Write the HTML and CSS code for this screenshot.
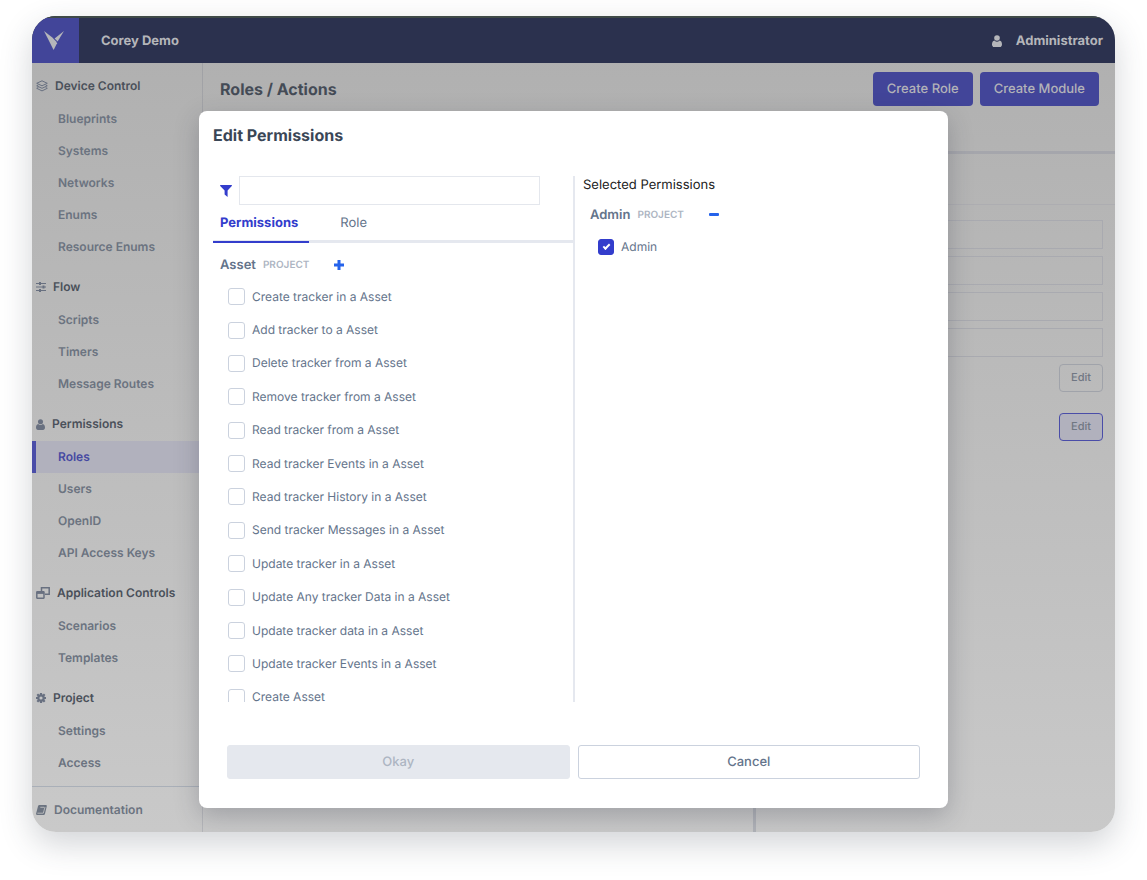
FILE: index.html
```html
<!DOCTYPE html>
<html lang="en">
<head>
<meta charset="utf-8">
<title>Corey Demo – Roles / Actions</title>
<meta name="viewport" content="width=device-width, initial-scale=1">
<link rel="stylesheet" href="styles.css">
</head>
<body>
<svg class="defs" aria-hidden="true">
  <symbol id="user" viewBox="0 0 10 12"><circle cx="5" cy="3" r="2.8"/><path d="M2.4 5.4C.8 5.7 0 7.3 0 9.4 0 10.900.9 12 2.200 12h5.600C9.100 12 10 10.900 10 9.400c0-2.100-.8-3.700-2.400-4a3.700 3.700 0 0 1-5.200 0z"/></symbol>
</svg>
<div class="app">
  <header class="topbar">
    <a class="logo" href="#" aria-label="Home">
      <svg width="20" height="19" viewBox="0 0 20 19" fill="currentColor"><path d="M0 0 8 6.200 12.200 10.600 13 12.300 9.600 19z"/><path d="M20 0 13.600 10.600 10.600 7.600z"/></svg>
    </a>
    <span class="project">Corey Demo</span>
    <a class="account" href="#"><svg width="10" height="12" fill="currentColor"><use href="#user"/></svg>Administrator</a>
  </header>
  <div class="body">
    <nav class="sidebar">
      <section class="group">
        <h2 class="group-title"><svg width="12" height="12" viewBox="0 0 12 12" fill="none" stroke="currentColor" stroke-width="1" stroke-linejoin="round"><path d="M6 .8 11.300 3.300 6 5.800.7 3.300z"/><path d="M2.300 5 .7 5.800 6 8.300l5.300-2.500L9.700 5"/><path d="M2.300 7.500.7 8.300 6 10.900l5.300-2.600-1.600-.8"/></svg>Device Control</h2>
        <a class="item" href="#">Blueprints</a>
        <a class="item" href="#">Systems</a>
        <a class="item" href="#">Networks</a>
        <a class="item" href="#">Enums</a>
        <a class="item" href="#">Resource Enums</a>
      </section>
      <section class="group">
        <h2 class="group-title"><svg width="10" height="10" viewBox="0 0 10 10" stroke="currentColor" fill="none"><path d="M0 1.500h10M0 5h10M0 8.500h10"/><path stroke-width="2" d="M4 0v3M7.500 3.500v3M4 7v3"/></svg>Flow</h2>
        <a class="item" href="#">Scripts</a>
        <a class="item" href="#">Timers</a>
        <a class="item" href="#">Message Routes</a>
      </section>
      <section class="group">
        <h2 class="group-title"><svg width="9" height="11" fill="currentColor"><use href="#user"/></svg>Permissions</h2>
        <a class="item active" href="#" aria-current="page">Roles</a>
        <a class="item" href="#">Users</a>
        <a class="item" href="#">OpenID</a>
        <a class="item" href="#">API Access Keys</a>
      </section>
      <section class="group">
        <h2 class="group-title"><svg width="14" height="12" viewBox="0 0 14 12" fill="none" stroke="currentColor" stroke-width="1.500"><path d="M5.500 4V.8h7.700v6.500H9"/><rect x=".8" y="4.800" width="7.200" height="6.400" rx=".4"/><path stroke-width="2.200" d="M1 5.800h7"/></svg>Application Controls</h2>
        <a class="item" href="#">Scenarios</a>
        <a class="item" href="#">Templates</a>
      </section>
      <section class="group">
        <h2 class="group-title"><svg width="10" height="10" viewBox="0 0 10 10" fill="none" stroke="currentColor"><circle cx="5" cy="5" r="2.700" stroke-width="2.200"/><path stroke-width="2.200" d="M5 0v2M5 8v2M0 5h2M8 5h2M1.300 1.300l1.500 1.500M7.200 7.200l1.500 1.500M1.300 8.700l1.500-1.500M7.200 2.800l1.500-1.500"/></svg>Project</h2>
        <a class="item" href="#">Settings</a>
        <a class="item" href="#">Access</a>
      </section>
      <a class="docs" href="#"><svg width="11" height="10" viewBox="0 0 11 10"><path fill="currentColor" d="M3.400 0h6.400q1.300 0 1 1.200L9 8.800Q8.700 10 7.500 10H1.300Q-.2 10 .1 8.500L2 1.200Q2.300 0 3.400 0z"/><path d="M4.300 2.300h3.800M1.400 8.200h5.900L9 2" fill="none" stroke="#c6c6c6" stroke-width=".8"/></svg>Documentation</a>
    </nav>
    <main class="main">
      <div class="page-head">
        <h1>Roles / Actions</h1>
        <button class="primary" type="button">Create Role</button>
        <button class="primary" type="button">Create Module</button>
      </div>
      <div class="columns">
        <div class="column-list"></div>
        <div class="details">
          <div class="details-head"></div>
          <div class="details-form">
            <input type="text" aria-label="Role name">
            <input type="text" aria-label="Role key">
            <input type="text" aria-label="Description">
            <input type="text" aria-label="Default page">
            <button class="edit" type="button">Edit</button>
            <button class="edit current" type="button">Edit</button>
          </div>
        </div>
      </div>
    </main>
  </div>

  <div class="overlay">
    <div class="modal" role="dialog" aria-modal="true" aria-labelledby="modal-title">
      <h2 class="modal-title" id="modal-title">Edit Permissions</h2>
      <div class="panes">
        <div class="pane available">
          <div class="filter">
            <label for="filter" aria-label="Filter permissions"><svg width="12" height="12" viewBox="0 0 12 12" fill="currentColor"><path d="M.5 0h11q.8.3.300 1L7.600 5.500V12L4.600 9.500v-4L.2 1Q-.2.3.5 0z"/></svg></label>
            <input id="filter" type="text">
          </div>
          <div class="tabs" role="tablist">
            <button class="tab selected" role="tab" aria-selected="true" type="button">Permissions</button>
            <button class="tab" role="tab" aria-selected="false" type="button">Role</button>
          </div>
          <div class="scope"><strong>Asset</strong><span>PROJECT</span>
            <button class="toggle" type="button" aria-label="Add all"><svg width="10" height="10" viewBox="0 0 10 10" stroke="currentColor" stroke-width="3"><path d="M5 0v10M0 5h10"/></svg></button>
          </div>
          <div class="options">
            <label class="option"><input type="checkbox">Create tracker in a Asset</label>
            <label class="option"><input type="checkbox">Add tracker to a Asset</label>
            <label class="option"><input type="checkbox">Delete tracker from a Asset</label>
            <label class="option"><input type="checkbox">Remove tracker from a Asset</label>
            <label class="option"><input type="checkbox">Read tracker from a Asset</label>
            <label class="option"><input type="checkbox">Read tracker Events in a Asset</label>
            <label class="option"><input type="checkbox">Read tracker History in a Asset</label>
            <label class="option"><input type="checkbox">Send tracker Messages in a Asset</label>
            <label class="option"><input type="checkbox">Update tracker in a Asset</label>
            <label class="option"><input type="checkbox">Update Any tracker Data in a Asset</label>
            <label class="option"><input type="checkbox">Update tracker data in a Asset</label>
            <label class="option"><input type="checkbox">Update tracker Events in a Asset</label>
            <label class="option"><input type="checkbox">Create Asset</label>
          </div>
        </div>
        <div class="pane chosen">
          <h3 class="chosen-title">Selected Permissions</h3>
          <div class="scope"><strong>Admin</strong><span>PROJECT</span>
            <button class="toggle" type="button" aria-label="Remove all"><svg width="10" height="10" viewBox="0 0 10 10"><rect y="3" width="10" height="3" rx="1" fill="currentColor"/></svg></button>
          </div>
          <label class="option"><input type="checkbox" checked>Admin</label>
        </div>
      </div>
      <div class="actions">
        <button class="action" type="button" disabled>Okay</button>
        <button class="action" type="button">Cancel</button>
      </div>
    </div>
  </div>
</div>
</body>
</html>
```

FILE: styles.css
```css
*,
*::before,
*::after {
  box-sizing: border-box;
}

body {
  margin: 0;
  padding: 16px 32px 48px;
  background: #fff;
  color: #64748b;
  font: 12px/16px Inter, "Liberation Sans", sans-serif;
  text-rendering: geometricPrecision;
}

h1,
h2,
h3 {
  margin: 0;
}

a {
  color: inherit;
  text-decoration: none;
}

button,
input {
  font: inherit;
  margin: 0;
  text-rendering: inherit;
}

button {
  padding: 0;
  cursor: pointer;
}

svg {
  display: block;
  flex: none;
}

.defs {
  position: absolute;
  width: 0;
  height: 0;
}

.app {
  position: relative;
  display: flex;
  flex-direction: column;
  overflow: hidden;
  border-radius: 24px;
  background: linear-gradient(#afafaf, #c9c9c9);
  box-shadow: 0 12px 32px rgba(50, 60, 75, 0.22);
}

.topbar {
  display: flex;
  align-items: center;
  height: 47px;
  border-top: 2px solid #3f4a48;
  background: #2b314e;
  color: #b5b6ba;
  font-size: 13px;
  font-weight: 700;
}

.logo {
  display: grid;
  place-items: center;
  width: 47px;
  height: 100%;
  margin-right: 22px;
  padding-right: 3px;
  background: #424599;
}

.account {
  display: flex;
  align-items: center;
  gap: 14px;
  margin-left: auto;
  padding-right: 12px;
}

.body {
  display: flex;
  flex: 1;
}

.sidebar {
  flex: none;
  width: 171px;
  padding-top: 6px;
  border-right: 1px solid rgba(80, 90, 110, 0.16);
  color: #6b7380;
  font-weight: 600;
}

.group {
  margin-bottom: 7px;
}

.group-title {
  display: flex;
  align-items: center;
  gap: 7px;
  height: 34px;
  padding-left: 4px;
  color: #4a505a;
  font-size: 12px;
  font-weight: 600;
}

.group-title svg {
  color: #687080;
}

.item {
  display: flex;
  align-items: center;
  height: 32px;
  padding-left: 22px;
  border-left: 4px solid transparent;
}

.item.active {
  border-left-color: #4a4da8;
  background: #b1b1bd;
  color: #4649a2;
}

.docs {
  display: flex;
  align-items: center;
  gap: 7px;
  height: 46px;
  padding-left: 4px;
  border-top: 1px solid #a9afb8;
}

.main {
  display: flex;
  flex: 1;
  flex-direction: column;
}

.page-head {
  display: flex;
  align-items: flex-start;
  gap: 7px;
  height: 91px;
  padding: 9px 16px 0 17px;
  border-bottom: 3px solid #a5a6ac;
}

.page-head h1 {
  margin-right: auto;
  color: #444b56;
  font-size: 16px;
  font-weight: 700;
  line-height: 34px;
}

.primary {
  height: 34px;
  padding: 0 14px;
  border: 0;
  border-radius: 4px;
  background: #424599;
  color: #b3b3b8;
  font-size: 13px;
  font-weight: 500;
}

.columns {
  display: flex;
  flex: 1;
}

.column-list {
  flex: 1;
}

.details {
  width: 362px;
  border-left: 3px solid #b0b2b8;
}

.details-head {
  height: 51px;
  border-bottom: 1px solid #adadb1;
}

.details-form {
  display: flex;
  flex-direction: column;
  gap: 7px;
  padding: 15px 12px;
}

.details-form input {
  width: 100%;
  height: 29px;
  border: 1px solid #a9aab0;
  background: transparent;
}

.edit {
  align-self: flex-end;
  width: 44px;
  height: 28px;
  padding-bottom: 2px;
  border: 1px solid #a0a3aa;
  border-radius: 4px;
  background: transparent;
  color: #707783;
  font-size: 11px;
  font-weight: 500;
}

.edit.current {
  margin-top: 14px;
  border-color: #4a4da8;
  background: #b1b1bd;
}

.overlay {
  position: absolute;
  inset: 0;
  display: flex;
  align-items: flex-start;
  justify-content: center;
  padding: 95px 24px 24px;
}

.modal {
  width: 749px;
  max-width: 100%;
  padding: 14px 14px 29px;
  border-radius: 8px;
  background: #fff;
  box-shadow: 0 8px 24px rgba(40, 45, 60, 0.25);
}

.modal-title {
  color: #3a4656;
  font-size: 16px;
  font-weight: 700;
  line-height: 20px;
}

.panes {
  display: flex;
  height: 526px;
  margin-top: 31px;
}

.pane {
  overflow: hidden;
}

.available {
  flex: 0 1 362px;
  border-right: 2px solid #e5e8ef;
}

.filter {
  display: flex;
  align-items: center;
  gap: 7px;
  padding: 0 33px 0 7px;
  color: #333dcc;
}

.filter input {
  flex: 1;
  height: 29px;
  padding: 0 8px;
  border: 1px solid #e4e7ed;
  background: #fff;
}

.tabs {
  display: flex;
  gap: 24px;
  height: 38px;
  box-shadow: inset 0 -3px #e5e8ef;
}

.tab {
  padding: 0 11px 1px 7px;
  border: 0;
  border-bottom: 2px solid transparent;
  background: none;
  color: #64748b;
  font-size: 13px;
}

.tab.selected {
  border-color: #333dcc;
  color: #333dcc;
  font-weight: 700;
}

.scope {
  display: flex;
  align-items: center;
  gap: 7px;
  padding: 14px 7px 7px;
}

.scope strong {
  font-size: 13px;
  font-weight: 600;
}

.scope span {
  color: #adb5c2;
  font-size: 10px;
  font-weight: 600;
}

.toggle {
  margin-left: 18px;
  border: 0;
  background: none;
  color: #2563eb;
}

.options {
  display: grid;
  grid-auto-rows: 1fr;
  height: 434px;
}

.option {
  display: flex;
  align-items: center;
  gap: 7px;
  padding-left: 15px;
}

.option input {
  display: grid;
  place-items: center;
  width: 17px;
  height: 17px;
  border: 1px solid #cbd2de;
  border-radius: 3px;
  background: #fff;
  appearance: none;
}

.option input:checked {
  width: 16px;
  height: 16px;
  border-color: #333dcc;
  background: #333dcc;
}

.option input:checked::before {
  content: "";
  width: 7px;
  height: 4px;
  margin-bottom: 2px;
  border: solid #fff;
  border-width: 0 0 2px 2px;
  transform: rotate(-45deg);
}

.chosen {
  flex: 1;
  padding-left: 8px;
}

.chosen-title {
  padding-top: 1px;
  color: #222;
  font-size: 13px;
  font-weight: 400;
}

.chosen .scope {
  padding-bottom: 16px;
}

.actions {
  display: flex;
  gap: 8px;
  margin-top: 43px;
  padding: 0 14px;
}

.action {
  flex: 1;
  height: 34px;
  border: 1px solid #cbd2de;
  border-radius: 3px;
  background: #fff;
  color: #64748b;
  font-size: 13px;
  font-weight: 500;
}

.action:disabled {
  border-color: #e5e8ee;
  background: #e5e8ee;
  color: #adb5c2;
}
```
